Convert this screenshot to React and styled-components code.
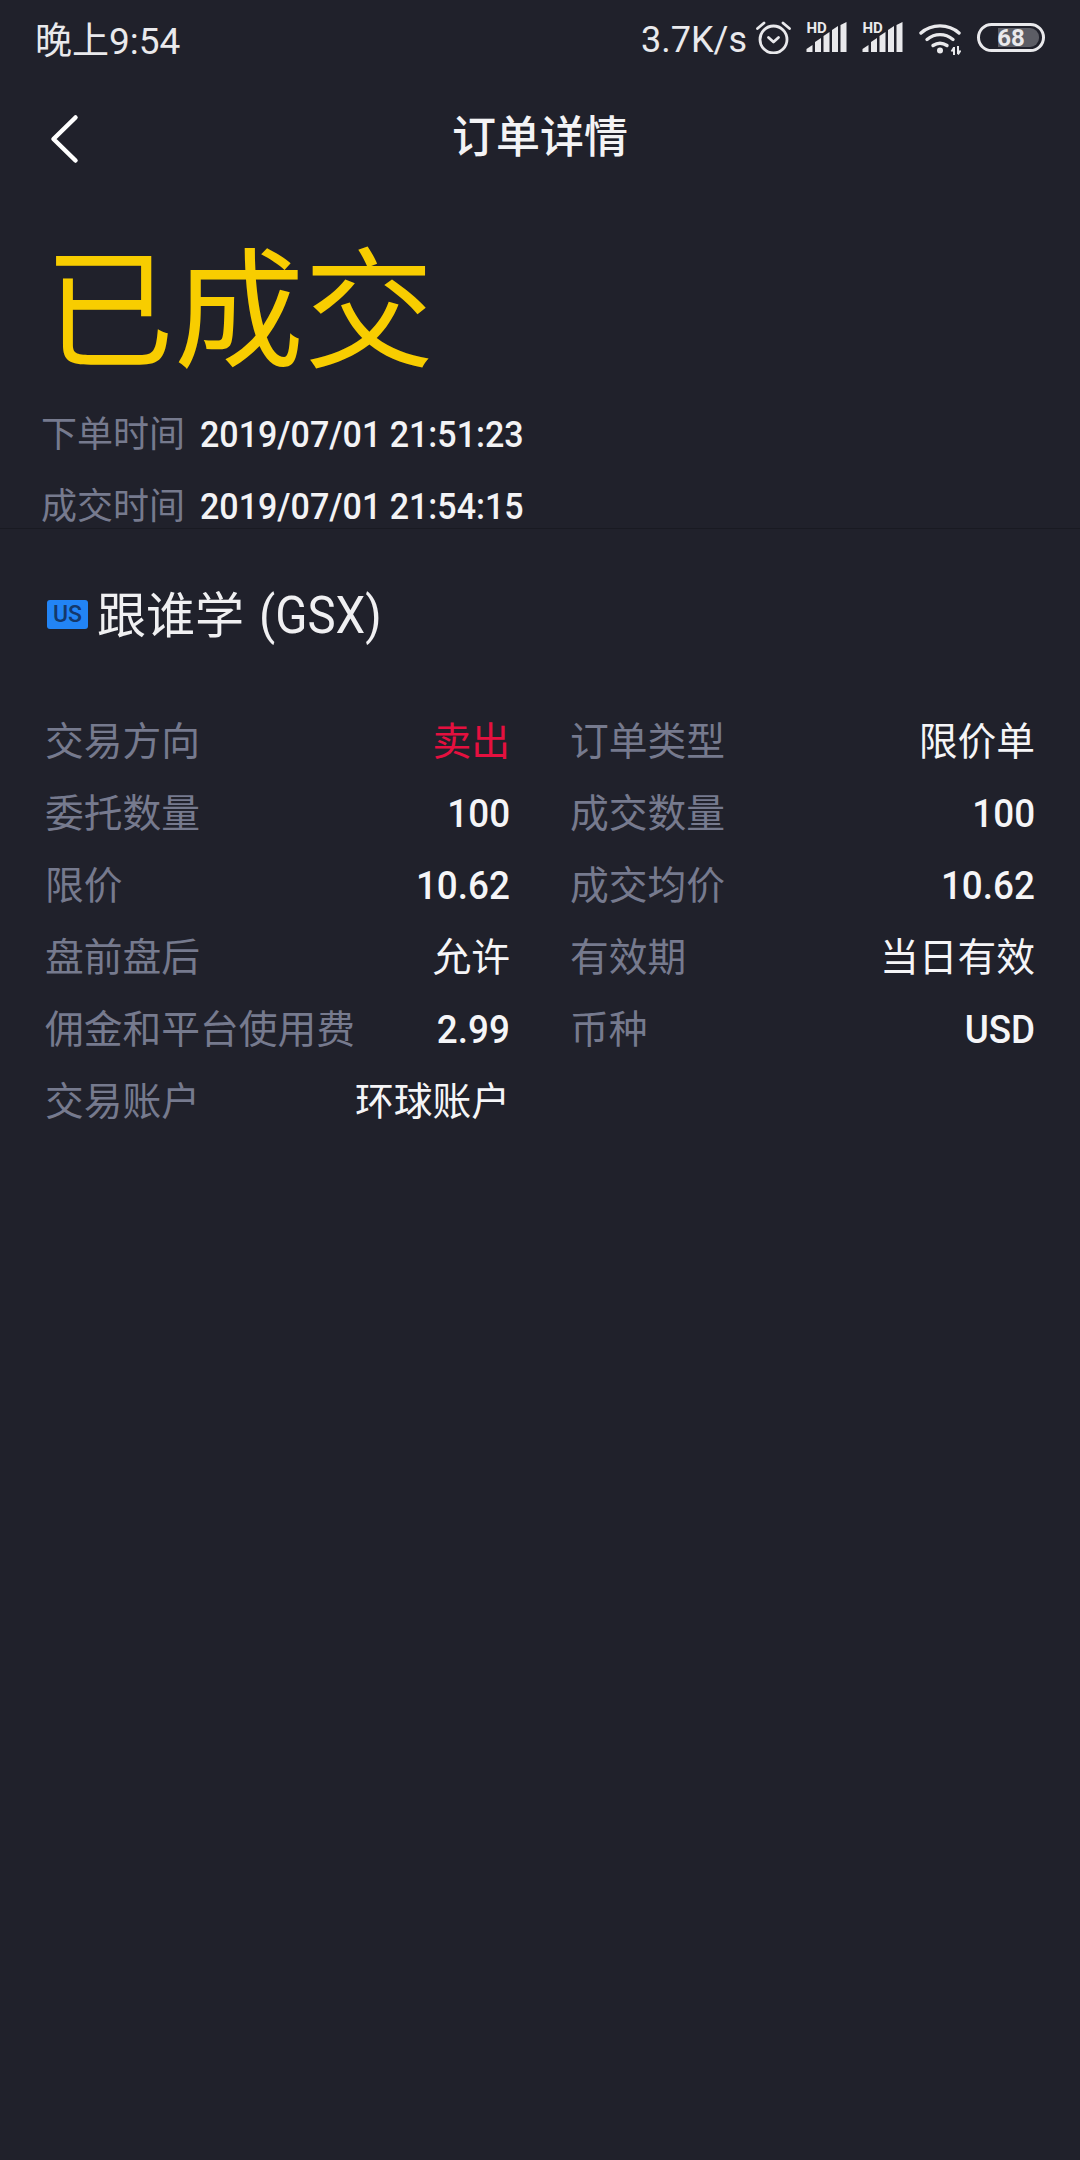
import React from "react";
import styled, { createGlobalStyle } from "styled-components";

const GlobalStyle = createGlobalStyle`
  html, body {
    margin: 0;
    padding: 0;
    background: #20212b;
  }
`;

const Page = styled.div`
  width: 1080px;
  height: 2160px;
  background: #20212b;
  color: #fff;
  font-family: Roboto, "Noto Sans CJK SC", sans-serif;
  overflow: hidden;
`;

const StatusBar = styled.div`
  height: 78px;
  padding: 0 35px 0 35px;
  display: flex;
  align-items: center;
  justify-content: space-between;
  color: #e9e9ec;
`;

const Clock = styled.span`
  font-size: 37px;
  margin-bottom: 2px;
`;

const StatusRight = styled.div`
  display: flex;
  align-items: flex-start;
  height: 78px;
`;

const Speed = styled.span`
  font-size: 36px;
  line-height: 80px;
  margin-right: 9px;
`;

const IconSlot = styled.span`
  display: flex;
  margin-top: ${(p) => p.$top}px;
  margin-right: ${(p) => p.$gap || 15}px;
`;

const NavBar = styled.div`
  height: 116px;
  display: flex;
  align-items: center;
  position: relative;
  justify-content: center;
`;

const BackButton = styled.svg`
  position: absolute;
  left: 49px;
  top: 36px;
`;

const NavTitle = styled.h1`
  margin: 0 0 4px;
  font-size: 44px;
  font-weight: 500;
  color: #f3f3f5;
`;

const StatusTitle = styled.div`
  margin: 44px 0 0 44px;
  font-size: 130px;
  line-height: 150px;
  color: #f8cd00;
`;

const TimeList = styled.div`
  margin-top: 27px;
  padding-left: 41px;
  height: 114px;
  box-sizing: border-box;
  border-bottom: 1px solid #191a22;
  display: flex;
  flex-direction: column;
  gap: 32px;
`;

const TimeRow = styled.div`
  display: flex;
  height: 40px;
  line-height: 40px;
  gap: 15px;
  font-size: 36px;
`;

const TimeLabel = styled.span`
  color: #767a8e;
`;

const TimeValue = styled.span`
  display: inline-block;
  font-weight: 500;
  color: #f3f3f5;
  transform: scaleX(0.945);
  transform-origin: left center;
`;

const Stock = styled.div`
  display: flex;
  align-items: center;
  height: 70px;
  margin: 50px 0 0 47px;
  gap: 9px;
`;

const MarketBadge = styled.span`
  width: 41px;
  height: 29px;
  background: #2284f5;
  color: #14386b;
  border-radius: 3px;
  font-size: 23px;
  font-weight: 500;
  display: flex;
  align-items: center;
  justify-content: center;
`;

const StockName = styled.span`
  margin-top: 4px;
  font-size: 49px;
  line-height: 70px;
  color: #f0f0f2;
`;

const StockCode = styled.span`
  display: inline-block;
  margin-left: 15px;
  font-size: 52px;
  transform: scaleX(0.91);
  transform-origin: left center;
`;

const Details = styled.div`
  display: grid;
  grid-template-columns: 465px 465px;
  column-gap: 60px;
  grid-auto-rows: 72px;
  margin: 57px 0 0 45px;
`;

const Detail = styled.div`
  display: flex;
  justify-content: space-between;
  font-size: 38.75px;
  line-height: 72px;
`;

const DetailLabel = styled.span`
  color: #767a8e;
`;

const DetailValue = styled.span`
  color: ${(p) => p.$color || "#f5f5f7"};
`;

const DetailNumber = styled.span`
  display: inline-block;
  color: #f5f5f7;
  font-weight: 500;
  transform: scaleX(0.95);
  transform-origin: right center;
`;

const BatteryShell = styled.div`
  position: relative;
  width: 68px;
  height: 29px;
  margin-top: 23px;
  box-sizing: border-box;
  border: 3px solid #e9e9ec;
  border-radius: 15px;
  display: flex;
  align-items: center;
  justify-content: center;
`;

const BatteryFill = styled.div`
  position: absolute;
  left: 18px;
  top: 2px;
  bottom: 2px;
  right: 3px;
  border-radius: 0 9px 9px 0;
  background: #5c5d65;
`;

const BatteryText = styled.span`
  position: relative;
  font-size: 24px;
  font-weight: 700;
  color: #e9e9ec;
`;

const details = [
  { label: "交易方向", value: "卖出", color: "#e5103f" },
  { label: "订单类型", value: "限价单" },
  { label: "委托数量", value: "100", num: true },
  { label: "成交数量", value: "100", num: true },
  { label: "限价", value: "10.62", num: true },
  { label: "成交均价", value: "10.62", num: true },
  { label: "盘前盘后", value: "允许" },
  { label: "有效期", value: "当日有效" },
  { label: "佣金和平台使用费", value: "2.99", num: true },
  { label: "币种", value: "USD", num: true },
  { label: "交易账户", value: "环球账户" },
];

const Alarm = () => (
  <svg width="35" height="33" viewBox="0 0 35 33" fill="none" stroke="#e9e9ec" strokeWidth="2.8" strokeLinecap="round" strokeLinejoin="round">
    <circle cx="17.500" cy="18.500" r="13.500" />
    <path d="M12.500 16.500 17.500 21l5-4.500" />
    <path d="M1.500 7.500 8 2M33.500 7.500 27 2" />
  </svg>
);

const Signal = () => (
  <svg width="41" height="35" viewBox="0 -4 41 35" fill="#e9e9ec">
    <path d="M0.500 31v-3l6-4v7zM9 31V21l6-4v14zM17.500 31V15l6-4v20zM26 31V9l6-4v26zM34.500 31V4l6-3v30z" />
    <text x="0.500" y="12" fontSize="15" fontWeight="700" fontFamily="Roboto, sans-serif">HD</text>
  </svg>
);

const Wifi = () => (
  <svg width="42" height="32" viewBox="0 0 42 32" fill="none" stroke="#e9e9ec" strokeWidth="3.400" strokeLinecap="round">
    <path d="M2 10C12.500 0.500 29.500 0.500 40 10" />
    <path d="M8 16.500c8-6.500 18-6.500 26 0" />
    <path d="M14 22.500c4.500-3 9.500-3 14 0" />
    <circle cx="21" cy="27.500" r="3" fill="#e9e9ec" stroke="none" />
    <path d="M35 24v8M39 23v8" strokeWidth="2" strokeLinecap="butt" />
    <path d="M32.500 28.500l2.500-4M41.500 27.500l-2.500 4" strokeWidth="1.800" strokeLinecap="butt" />
  </svg>
);

export default function App() {
  return (
    <Page>
      <GlobalStyle />
      <StatusBar>
        <Clock>晚上9:54</Clock>
        <StatusRight>
          <Speed>3.7K/s</Speed>
          <IconSlot $top={21}><Alarm /></IconSlot>
          <IconSlot $top={17}><Signal /></IconSlot>
          <IconSlot $top={17} $gap={16}><Signal /></IconSlot>
          <IconSlot $top={23} $gap={16}><Wifi /></IconSlot>
          <BatteryShell>
            <BatteryFill />
            <BatteryText>68</BatteryText>
          </BatteryShell>
        </StatusRight>
      </StatusBar>
      <NavBar>
        <BackButton width="32" height="50" viewBox="0 0 32 50" fill="none" stroke="#fff" strokeWidth="4.500" strokeLinecap="round" strokeLinejoin="round">
          <path d="M26.500 3.500 4.500 25l22 21.500" />
        </BackButton>
        <NavTitle>订单详情</NavTitle>
      </NavBar>
      <StatusTitle>已成交</StatusTitle>
      <TimeList>
        <TimeRow>
          <TimeLabel>下单时间</TimeLabel>
          <TimeValue>2019/07/01 21:51:23</TimeValue>
        </TimeRow>
        <TimeRow>
          <TimeLabel>成交时间</TimeLabel>
          <TimeValue>2019/07/01 21:54:15</TimeValue>
        </TimeRow>
      </TimeList>
      <Stock>
        <MarketBadge>US</MarketBadge>
        <StockName>
          跟谁学<StockCode>(GSX)</StockCode>
        </StockName>
      </Stock>
      <Details>
        {details.map((d) => (
          <Detail key={d.label}>
            <DetailLabel>{d.label}</DetailLabel>
            {d.num ? (
              <DetailNumber>{d.value}</DetailNumber>
            ) : (
              <DetailValue $color={d.color}>{d.value}</DetailValue>
            )}
          </Detail>
        ))}
      </Details>
    </Page>
  );
}
